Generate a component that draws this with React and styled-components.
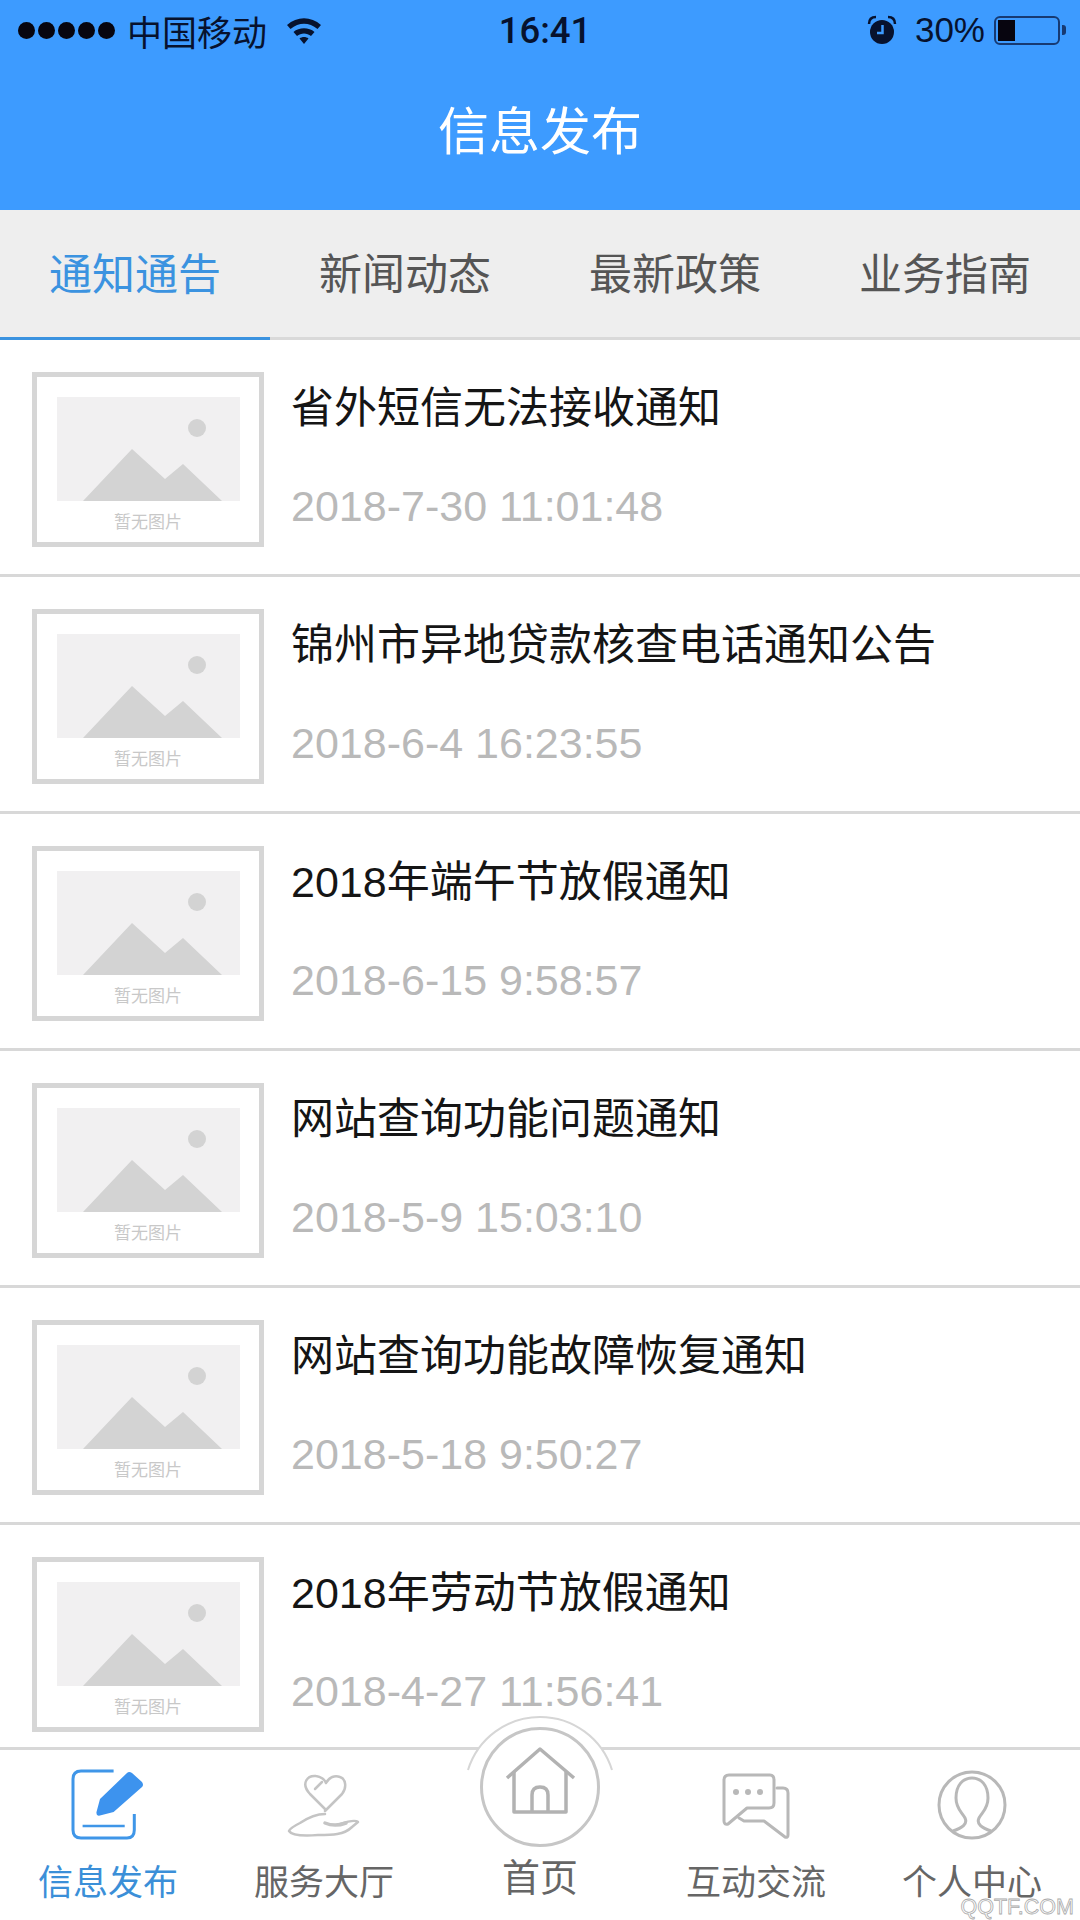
import React from "react";
import styled, { createGlobalStyle } from "styled-components";

const notices = [
  { title: "省外短信无法接收通知", time: "2018-7-30 11:01:48" },
  { title: "锦州市异地贷款核查电话通知公告", time: "2018-6-4 16:23:55" },
  { title: "2018年端午节放假通知", time: "2018-6-15 9:58:57" },
  { title: "网站查询功能问题通知", time: "2018-5-9 15:03:10" },
  { title: "网站查询功能故障恢复通知", time: "2018-5-18 9:50:27" },
  { title: "2018年劳动节放假通知", time: "2018-4-27 11:56:41" },
];

const tabs = ["通知通告", "新闻动态", "最新政策", "业务指南"];

function App() {
  return (
    <Page>
      <GlobalStyle />
      <Header>
        <StatusBar>
          <StatusLeft>
            <Signal>
              {[0, 1, 2, 3, 4].map((i) => (
                <Dot key={i} />
              ))}
            </Signal>
            <Carrier>中国移动</Carrier>
            <WifiIcon />
          </StatusLeft>
          <Clock>16:41</Clock>
          <StatusRight>
            <AlarmIcon />
            <Percent>30%</Percent>
            <Battery>
              <BatteryFill />
            </Battery>
            <BatteryNub />
          </StatusRight>
        </StatusBar>
        <NavTitle>信息发布</NavTitle>
      </Header>

      <TabRow>
        {tabs.map((tab, i) => (
          <Tab key={tab} $active={i === 0}>
            {tab}
          </Tab>
        ))}
      </TabRow>

      <List>
        {notices.map((item) => (
          <Row key={item.time}>
            <Thumb>
              <ThumbScene />
              <ThumbCaption>暂无图片</ThumbCaption>
            </Thumb>
            <RowText>
              <RowTitle>{item.title}</RowTitle>
              <RowTime>{item.time}</RowTime>
            </RowText>
          </Row>
        ))}
      </List>

      <BottomBar>
        <BottomItem>
          <EditIcon />
          <BottomLabel $active>信息发布</BottomLabel>
        </BottomItem>
        <BottomItem>
          <HandIcon />
          <BottomLabel>服务大厅</BottomLabel>
        </BottomItem>
        <BottomItem>
          <HomeBadge />
          <HomeLabel>首页</HomeLabel>
        </BottomItem>
        <BottomItem>
          <ChatIcon />
          <BottomLabel>互动交流</BottomLabel>
        </BottomItem>
        <BottomItem>
          <PersonIcon />
          <BottomLabel>个人中心</BottomLabel>
        </BottomItem>
        <Watermark>QQTF.COM</Watermark>
      </BottomBar>
    </Page>
  );
}

function WifiIcon() {
  return (
    <svg width="36" height="30" viewBox="0 0 36 30">
      <path d="M1 10 C11 1 25 1 35 10 L31.5 14 C23 7 13 7 4.5 14 Z" fill="#07122e" />
      <path d="M7.5 17 C13 12 23 12 28.5 17 L25 21 C21 17.5 15 17.5 11 21 Z" fill="#07122e" />
      <path d="M13.5 23.5 C16 21.5 20 21.5 22.5 23.5 L18 29 Z" fill="#07122e" />
    </svg>
  );
}

function AlarmIcon() {
  return (
    <svg width="30" height="30" viewBox="0 0 30 30">
      <circle cx="15" cy="17" r="12" fill="#07122e" />
      <path d="M2 9 C2 4 5 2 9 2 M28 9 C28 4 25 2 21 2" stroke="#07122e" strokeWidth="2.5" fill="none" />
      <path d="M15.5 10 V18 H10" stroke="#3d9bff" strokeWidth="2.5" fill="none" />
    </svg>
  );
}

function ThumbScene() {
  return (
    <SceneSvg viewBox="0 0 183 104">
      <rect width="183" height="104" fill="#f1f0f1" />
      <circle cx="140" cy="31" r="9" fill="#d3d3d3" />
      <path d="M26 104 L75 52 L108 82 L126 67 L165 104 Z" fill="#d3d3d3" />
    </SceneSvg>
  );
}

function EditIcon() {
  return (
    <IconSvg viewBox="63 40 90 90">
      <path
        d="M113.6 52 H81 Q73 52 73 60 V111 Q73 119 81 119 H127 Q134.3 119 134.3 111 V95"
        fill="none"
        stroke="#3f96e8"
        strokeWidth="3"
      />
      <path d="M82.6 107 H124.7" stroke="#3f96e8" strokeWidth="2.5" />
      <path
        d="M127 54 Q129 52 132 54 L142 63 Q144 66 142 68 L113.6 93 L99 96.7 Q96 97 96.5 93 L100 80 Z"
        fill="#3d93ee"
      />
    </IconSvg>
  );
}

function HandIcon() {
  return (
    <IconSvg viewBox="279 40 90 90">
      <g fill="none" stroke="#c4c4c4" strokeWidth="2.5" strokeLinecap="round" strokeLinejoin="round">
        <path d="M325 90 L310 75 C300 64 308 56 316 57 C321 57.5 325 61 326 64 C329 58 335 56 340 58 C346 60 347 69 342 75 L325 92" />
        <path d="M315 70 L322 63" />
        <path d="M325 95 C317 95 309 98 300 104 C294 107 290 110 289 112 C292 117 305 117 318 116 C332 116 344 116 352 108 L358 103 C355 100 346 103 340 105" />
        <path d="M325 104 C332 107 338 107 346 104" strokeWidth="3.5" />
      </g>
    </IconSvg>
  );
}

function ChatIcon() {
  return (
    <IconSvg viewBox="711 40 90 90">
      <g fill="none" stroke="#b8b8b8" strokeWidth="3" strokeLinejoin="round" strokeLinecap="round">
        <path d="M724 61 Q724 56 729 56 H770 Q774 56 774 61 V84 Q774 89 769 89 H747 L728 105 Q724 106 724 102 Z" />
        <path d="M777 69 H783 Q788 69 788 74 V116 Q788 119 785 118 L764 102 H744 L739 99" />
      </g>
      <circle cx="736" cy="73" r="3" fill="#b8b8b8" />
      <circle cx="748" cy="73" r="3" fill="#b8b8b8" />
      <circle cx="760" cy="73" r="3" fill="#b8b8b8" />
    </IconSvg>
  );
}

function PersonIcon() {
  return (
    <IconSvg viewBox="927 40 90 90">
      <g fill="none" stroke="#b8b8b8" strokeWidth="3">
        <circle cx="972" cy="86" r="33" />
        <path d="M953 112 C962 109 968 105 965 99 C962 93 956 90 956 79 C956 66 963 59 972 59 C981 59 988 66 988 79 C988 90 982 93 979 99 C976 105 982 109 991 112" />
      </g>
    </IconSvg>
  );
}

function HomeBadge() {
  return (
    <BadgeSvg viewBox="0 0 160 160">
      <path d="M8 63 A75.4 75.4 0 0 1 152 63 Z" fill="#fff" />
      <path d="M8 63 A75.4 75.4 0 0 1 152 63" fill="none" stroke="#d6d6d6" strokeWidth="2" />
      <circle cx="80" cy="80" r="58.5" fill="#fff" stroke="#c6c6c6" strokeWidth="3" />
      <g fill="none" stroke="#b2b2b2" strokeWidth="3.5" strokeLinejoin="round">
        <path d="M47 71 L80 42 L114 71" />
        <path d="M54 65 V105 H106 V65" />
        <path d="M72 105 V88 Q72 80 80 80 Q88 80 88 88 V105" />
      </g>
    </BadgeSvg>
  );
}

const GlobalStyle = createGlobalStyle`
  html, body {
    margin: 0;
    padding: 0;
    background: #fff;
    font-family: "Liberation Sans", "Noto Sans CJK SC", sans-serif;
  }
`;

const Page = styled.div`
  width: 1080px;
  height: 1920px;
  display: flex;
  flex-direction: column;
  overflow: hidden;
  background: #fff;
`;

const Header = styled.header`
  height: 210px;
  flex-shrink: 0;
  background: #3d9bff;
`;

const StatusBar = styled.div`
  height: 60px;
  display: grid;
  grid-template-columns: 1fr auto 1fr;
  align-items: center;
  padding: 0 14px 0 18px;
  color: #07122e;
`;

const StatusLeft = styled.div`
  display: flex;
  align-items: center;
`;

const Signal = styled.div`
  display: flex;
  gap: 3px;
  margin-right: 12px;
`;

const Dot = styled.span`
  width: 17px;
  height: 17px;
  border-radius: 50%;
  background: #07050f;
`;

const Carrier = styled.span`
  font-size: 35px;
  margin-right: 19px;
`;

const Clock = styled.span`
  font-family: Roboto, "Liberation Sans", sans-serif;
  font-size: 36.5px;
  font-weight: 500;
  margin-left: 6px;
`;

const StatusRight = styled.div`
  display: flex;
  align-items: center;
  justify-content: flex-end;
`;

const Percent = styled.span`
  font-size: 35px;
  margin: 0 9px 0 18px;
`;

const Battery = styled.div`
  width: 66px;
  height: 29px;
  box-sizing: border-box;
  border: 2px solid #173a72;
  border-radius: 6px;
  padding: 2px;
`;

const BatteryFill = styled.div`
  width: 17px;
  height: 100%;
  background: #07050f;
`;

const BatteryNub = styled.div`
  width: 4px;
  height: 10px;
  margin-left: 2px;
  background: #173a72;
  border-radius: 0 3px 3px 0;
`;

const NavTitle = styled.h1`
  margin: 0;
  height: 146px;
  line-height: 146px;
  text-align: center;
  font-size: 51px;
  font-weight: 400;
  color: #fff;
`;

const TabRow = styled.nav`
  height: 130px;
  flex-shrink: 0;
  box-sizing: border-box;
  display: flex;
  background: #eeeeee;
  border-bottom: 3px solid #d9d9d9;
`;

const Tab = styled.div`
  width: 270px;
  height: 130px;
  box-sizing: border-box;
  display: flex;
  align-items: center;
  justify-content: center;
  font-size: 43px;
  padding-bottom: 6px;
  color: ${(p) => (p.$active ? "#3b93e0" : "#555")};
  border-bottom: 3px solid ${(p) => (p.$active ? "#3b93e0" : "transparent")};
`;

const List = styled.main`
  flex: 1;
  min-height: 0;
  overflow: hidden;
`;

const Row = styled.article`
  height: 237px;
  box-sizing: border-box;
  display: flex;
  padding: 32px 0 0 32px;
  border-bottom: 3px solid #d8d8d8;
`;

const Thumb = styled.div`
  width: 232px;
  height: 175px;
  box-sizing: border-box;
  flex-shrink: 0;
  border: 5px solid #d6d6d6;
  background: #fff;
  display: flex;
  flex-direction: column;
  align-items: center;
  padding-top: 20px;
`;

const SceneSvg = styled.svg`
  width: 183px;
  height: 104px;
  display: block;
`;

const ThumbCaption = styled.span`
  font-size: 17px;
  line-height: 22px;
  margin-top: 11px;
  color: #c8c8c8;
`;

const RowText = styled.div`
  margin-left: 27px;
  min-width: 0;
`;

const RowTitle = styled.h2`
  margin: 0;
  font-size: 43px;
  line-height: 72px;
  font-weight: 400;
  color: #151515;
`;

const RowTime = styled.time`
  display: block;
  margin-top: 38px;
  font-size: 43px;
  line-height: 48px;
  color: #b9b9b9;
`;

const BottomBar = styled.footer`
  height: 173px;
  flex-shrink: 0;
  box-sizing: border-box;
  position: relative;
  display: grid;
  grid-template-columns: repeat(5, 216px);
  background: #fff;
  border-top: 3px solid #d8d8d8;
  padding-top: 9px;
`;

const BottomItem = styled.div`
  position: relative;
  display: flex;
  flex-direction: column;
  align-items: center;
`;

const IconSvg = styled.svg`
  width: 90px;
  height: 90px;
  display: block;
  flex-shrink: 0;
`;

const BadgeSvg = styled.svg`
  position: absolute;
  left: 28px;
  top: -52px;
  width: 160px;
  height: 160px;
`;

const BottomLabel = styled.span`
  font-size: 35px;
  line-height: 44px;
  margin-top: 12px;
  color: ${(p) => (p.$active ? "#3b8fd8" : "#666")};
`;

const HomeLabel = styled.span`
  font-size: 38px;
  line-height: 44px;
  margin-top: 97px;
  color: #666;
`;

const Watermark = styled.span`
  position: absolute;
  right: 6px;
  bottom: 1px;
  font-size: 21.5px;
  line-height: 24px;
  color: #fff;
  -webkit-text-stroke: 0.8px #aaa;
`;

export default App;
